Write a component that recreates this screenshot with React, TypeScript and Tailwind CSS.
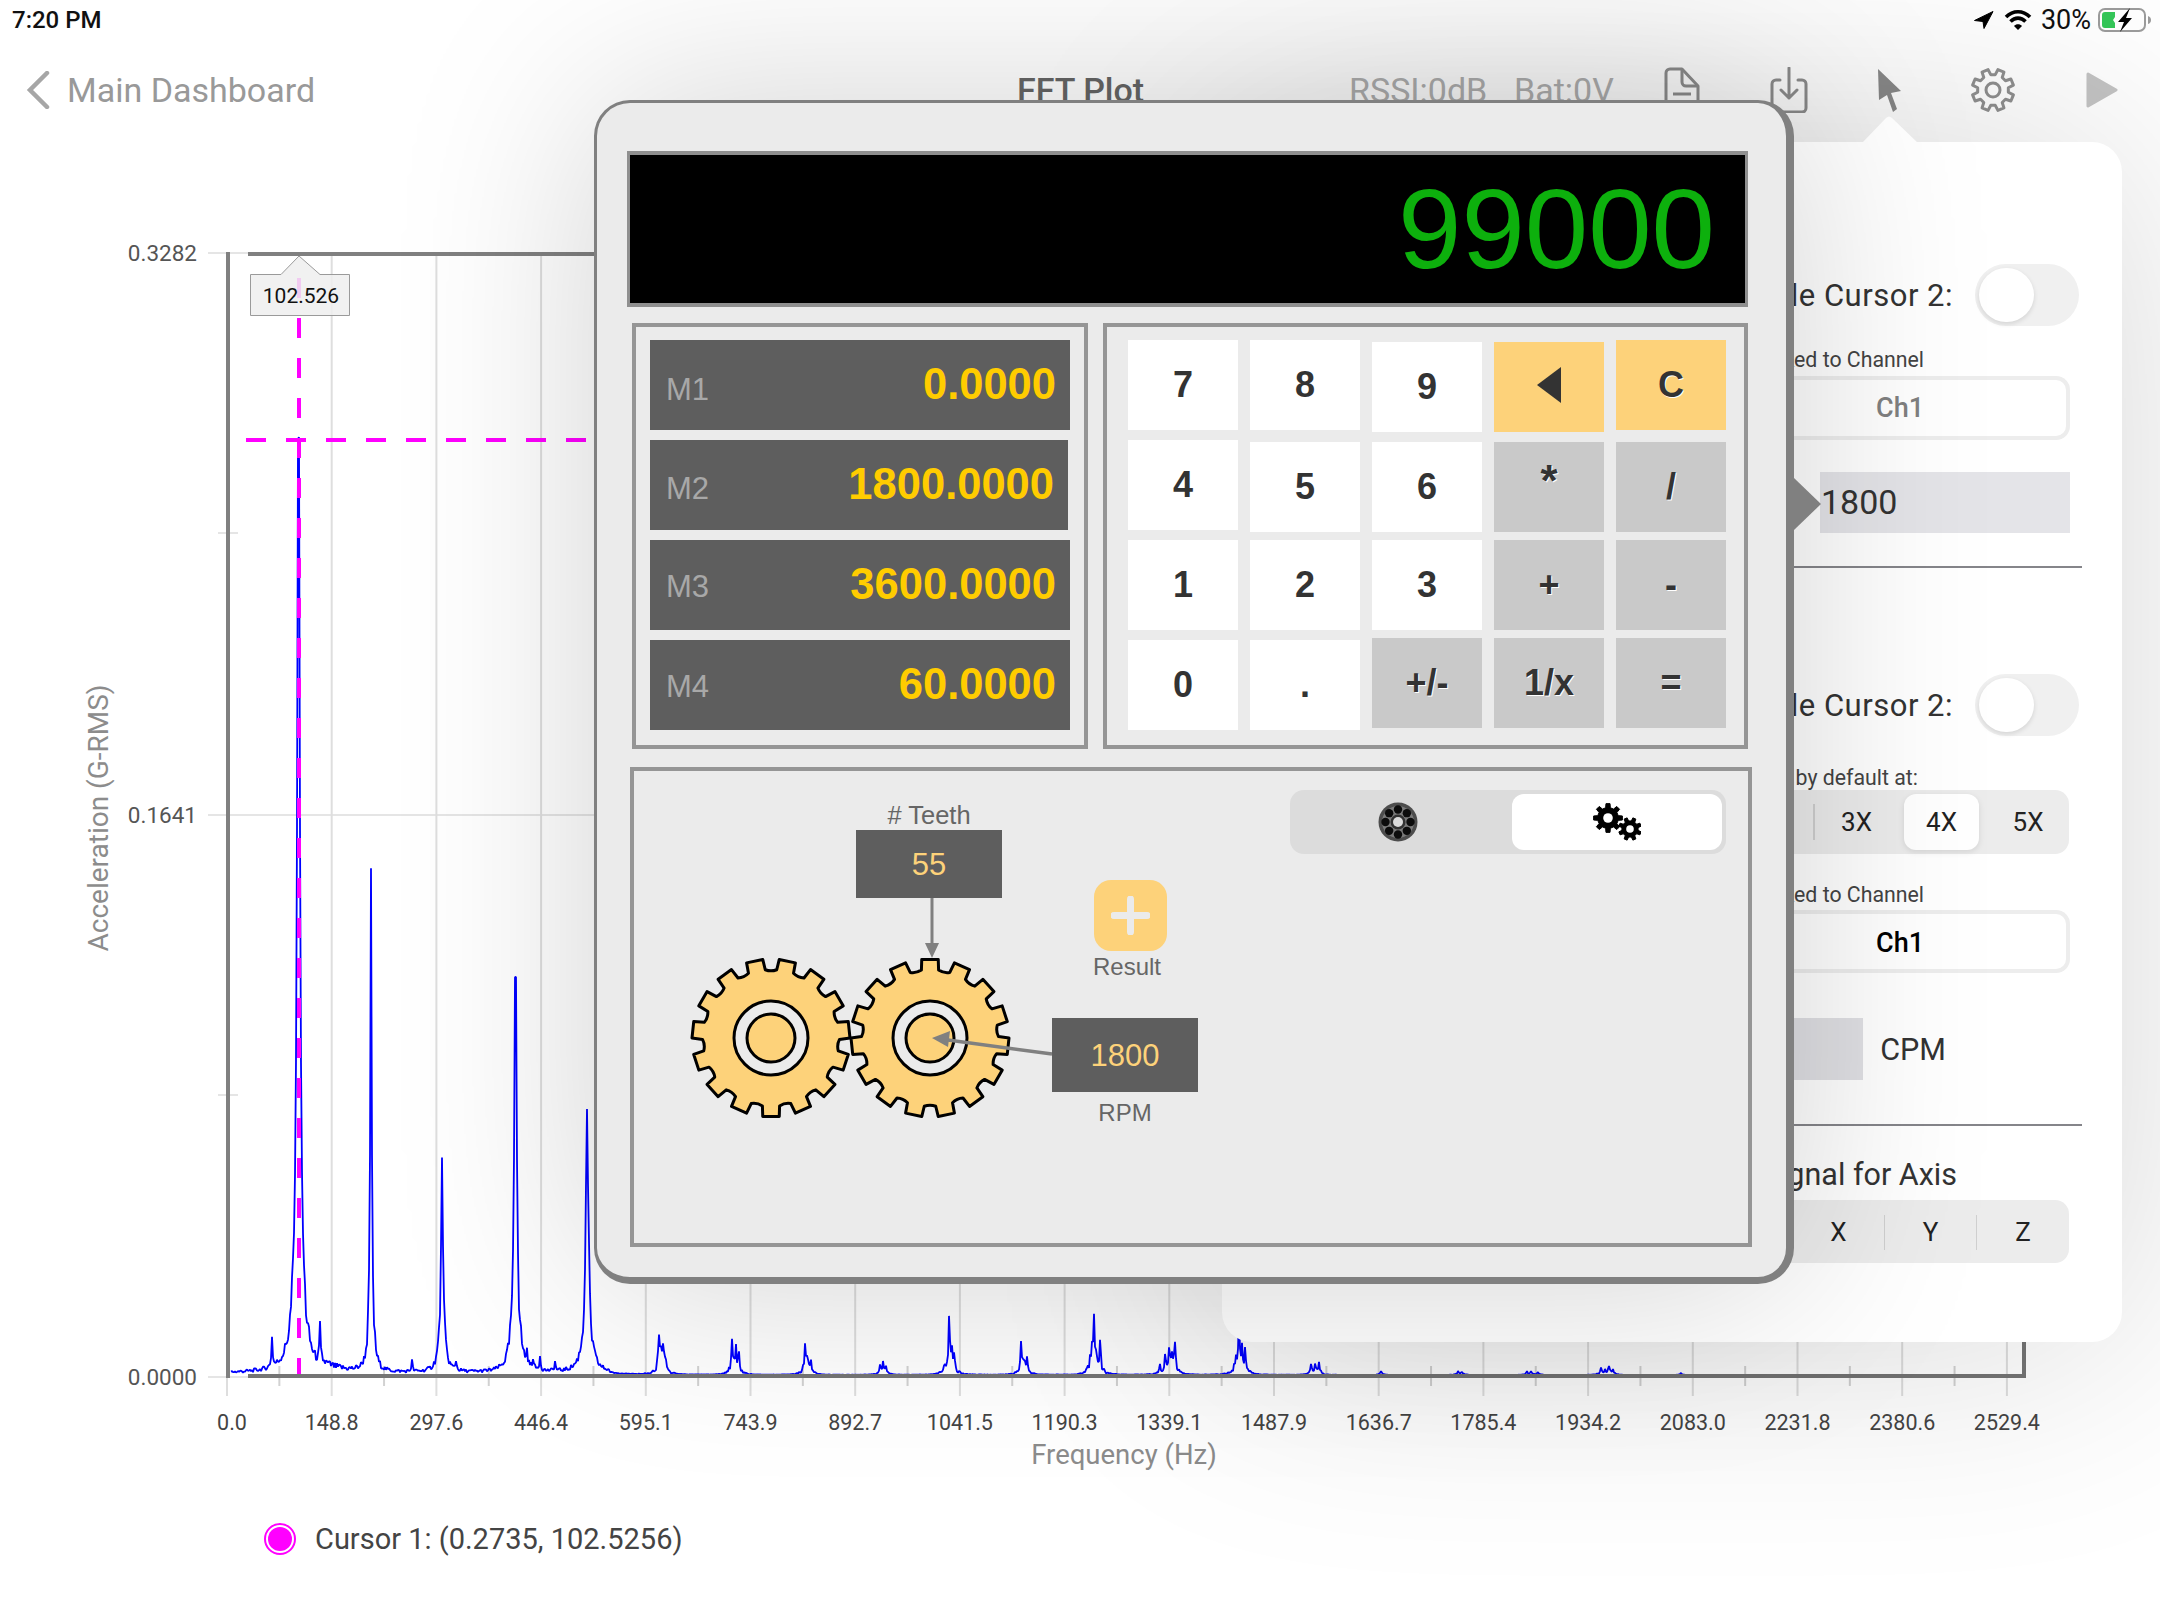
import React from "react";

const pt = (cx: number, cy: number, r: number, deg: number) => {
  const a = (deg * Math.PI) / 180;
  return `${(cx + r * Math.sin(a)).toFixed(2)} ${(cy - r * Math.cos(a)).toFixed(2)}`;
};

function gearPath(cx: number, cy: number, n: number, ro: number, ri: number, start: number, ho: number, hb: number, curve = 0) {
  let d = "";
  const step = 360 / n;
  for (let i = 0; i < n; i++) {
    const a = start + i * step;
    d += `${i === 0 ? "M" : "L"}${pt(cx, cy, ri, a - hb)} L${pt(cx, cy, ro, a - ho)} L${pt(cx, cy, ro, a + ho)} L${pt(cx, cy, ri, a + hb)} `;
    if (curve > 0) {
      d += `Q${pt(cx, cy, ri - curve, a + step / 2)} ${pt(cx, cy, ri, a + step - hb)} `;
    }
  }
  return d + "Z";
}

const noise = (x: number) => {
  const v = Math.sin(x * 12.9898) * 43758.5453;
  return v - Math.floor(v);
};

const majors = [
  { x: 298.5, h: 972, w: 1.5, bh: 60, bw: 7 },
  { x: 371, h: 469, w: 0.8, bh: 35, bw: 3.5 },
  { x: 442, h: 176, w: 1, bh: 40, bw: 3.5 },
  { x: 515.5, h: 403, w: 1.3, bh: 45, bw: 4.5 },
  { x: 587, h: 224, w: 1.4, bh: 40, bw: 5 },
];
const spikes: [number, number][] = [
  [272, 29], [320, 39], [412, 11], [456, 9], [527, 12], [533, 10], [540, 14], [555, 9], [659, 31], [661, 20], [663, 22], [665, 14],
  [732, 31], [736, 20], [739, 16], [805, 26], [807, 14], [811, 12],
  [880, 8], [883, 10], [886, 7], [945, 8], [949, 47], [952, 15], [954, 20], [1021, 27], [1024, 12], [1027, 15], [1090, 10], [1092, 14], [1094, 45], [1097, 12], [1100, 28], [1160, 9], [1165, 14], [1169, 24], [1172, 12], [1175, 29],
  [1236, 12], [1239, 60], [1242, 16], [1245, 17], [1311, 11], [1315, 8], [1319, 10], [1381, 4], [1458, 4], [1462, 3], [1527, 3], [1531, 3], [1538, 3], [1601, 6], [1605, 5], [1609, 9], [1613, 4], [1681, 2],
];

function spectrum() {
  const base = 1375;
  const out: string[] = [];
  for (let x = 231; x <= 1720; x++) {
    let t = 0;
    for (const p of majors) {
      t += p.h / (1 + ((x - p.x) / p.w) ** 2) + p.bh / (1 + ((x - p.x) / p.bw) ** 2);
    }
    let s = 0;
    let broad = 0;
    for (const [sx, sh] of spikes) {
      s += (x > 600 ? 0.82 : 1) * sh / (1 + ((x - sx) / 0.7) ** 2);
      if (x > 600) broad += (sh * 0.28) / (1 + ((x - sx) / 3) ** 2);
    }
    let floor = 0;
    if (x < 610) {
      const near = x > 321 && x < 365 ? 3 + ((365 - x) / 44) * 5 : 3;
      floor = near * (0.2 + 0.9 * noise(x));
    }
    const y = base - (t < 120 ? t * (0.8 + 0.4 * noise(x)) : t) - s - broad * (0.3 + 0.9 * noise(x * 2 + 1)) - floor;
    out.push(`${x},${Math.max(y, 300).toFixed(1)}`);
  }
  return out.join(" ");
}

const xLabels = ["0.0","148.8","297.6","446.4","595.1","743.9","892.7","1041.5","1190.3","1339.1","1487.9","1636.7","1785.4","1934.2","2083.0","2231.8","2380.6","2529.4"];

function Chart() {
  const xs = xLabels.map((_, i) => 227 + 104.7 * i);
  return (
    <svg viewBox="0 140 2160 1340" className="block w-[2160px] h-[1340px] [font-family:Roboto,sans-serif]">
      <line x1="208" y1="253" x2="248" y2="253" stroke="#e5e5e5" strokeWidth="2" />
      <line x1="208" y1="815" x2="2026" y2="815" stroke="#e5e5e5" strokeWidth="2" />
      <line x1="218" y1="533" x2="238" y2="533" stroke="#e5e5e5" strokeWidth="2" />
      <line x1="218" y1="1095" x2="238" y2="1095" stroke="#e5e5e5" strokeWidth="2" />
      <line x1="208" y1="1377" x2="248" y2="1377" stroke="#e5e5e5" strokeWidth="2" />
      {xs.map((x, i) => (
        <line key={i} x1={x} y1={i === 0 ? 1356 : 256} x2={x} y2="1396" stroke="#dedede" strokeWidth="2" />
      ))}
      {xs.slice(0, -1).map((x, i) => (
        <line key={i} x1={x + 52.35} y1="1366" x2={x + 52.35} y2="1386" stroke="#d2d2d2" strokeWidth="2" />
      ))}
      <polyline points={spectrum()} fill="none" stroke="#0000ff" strokeWidth="1.8" strokeLinejoin="bevel" />
      <line x1="299" y1="278" x2="299" y2="1375" stroke="#ff00ff" strokeWidth="4" strokeDasharray="20 20" />
      <line x1="246" y1="440" x2="594" y2="440" stroke="#ff00ff" strokeWidth="4" strokeDasharray="20 20" />
      <line x1="228" y1="252" x2="228" y2="1378" stroke="#808080" strokeWidth="4" />
      <line x1="248" y1="254" x2="2026" y2="254" stroke="#808080" strokeWidth="4" />
      <line x1="248" y1="1376" x2="2026" y2="1376" stroke="#757575" strokeWidth="4" />
      <line x1="2024" y1="254" x2="2024" y2="1378" stroke="#757575" strokeWidth="4" />
      <path d="M250.5 274.5 H281 L299 256 L320 274.5 H349.5 V315.5 H250.5 Z" fill="#eeeeee" fillOpacity="0.85" stroke="#9a9a9a" strokeWidth="1" />
      <text x="301" y="303" textAnchor="middle" className="text-[21px] fill-[#111]">102.526</text>
      <text x="197" y="261" textAnchor="end" className="text-[22.5px] fill-[#555]">0.3282</text>
      <text x="197" y="823" textAnchor="end" className="text-[22.5px] fill-[#555]">0.1641</text>
      <text x="197" y="1385" textAnchor="end" className="text-[22.5px] fill-[#555]">0.0000</text>
      {xLabels.map((t, i) => (
        <text key={t} x={i === 0 ? 232 : xs[i]} y="1430" textAnchor="middle" className="text-[21.5px] fill-[#444]">{t}</text>
      ))}
      <text x="1124" y="1464" textAnchor="middle" className="text-[27.5px] fill-[#8c8c8c]">Frequency (Hz)</text>
      <text transform="translate(108 818) rotate(-90)" textAnchor="middle" className="text-[28px] fill-[#8c8c8c]">Acceleration (G-RMS)</text>
    </svg>
  );
}

function StatusBar() {
  return (
    <div className="flex items-center justify-between h-[40px] pl-[12px] pr-[8px] text-[#111] [font-family:Roboto,sans-serif]">
      <span className="text-[24px] font-medium leading-none">7:20 PM</span>
      <div className="flex items-center">
        <svg width="20" height="18" viewBox="0 0 20 18"><path d="M19 0.5 L0.5 9.5 L9 10.5 L10 17.5 Z" fill="#000" stroke="#000" strokeLinejoin="round" /></svg>
        <svg width="28" height="22" viewBox="0 0 28 22" className="ml-[10px]">
          <path d="M2 8 C9 1 19 1 26 8" fill="none" stroke="#000" strokeWidth="3.6" />
          <path d="M6.5 12.5 C11 8 17 8 21.5 12.5" fill="none" stroke="#000" strokeWidth="3.6" />
          <path d="M10 17 L14 21 L18 17 C16 14.7 12 14.7 10 17 Z" fill="#000" />
        </svg>
        <span className="ml-[9px] text-[27px] leading-none">30%</span>
        <svg width="54" height="26" viewBox="0 0 54 26" className="ml-[7px]">
          <rect x="1" y="2" width="46" height="22" rx="6" fill="none" stroke="#9c9c9c" strokeWidth="2" />
          <path d="M7 5 H17 V10 L15 13 L17 16 V21 H7 Q4 21 4 18 V8 Q4 5 7 5 Z" fill="#34c759" />
          <path d="M50 9 Q53 10 53 13 Q53 16 50 17 Z" fill="#9c9c9c" />
          <path d="M32 1 L20 15 H26 L22 25 L34 11 H28 Z" fill="#000" />
        </svg>
      </div>
    </div>
  );
}

function NavBar() {
  const gear = gearPath(23, 23, 8, 21, 15.5, 22.5, 9, 14);
  return (
    <div className="flex items-center h-[100px] pl-[26px] [font-family:Roboto,sans-serif] text-[34px] leading-none">
      <div className="flex items-center w-[991px]">
        <svg width="24" height="38" viewBox="0 0 24 38"><path d="M21 2 L4 19 L21 36" fill="none" stroke="#a6a6a6" strokeWidth="4.5" strokeLinecap="round" /></svg>
        <span className="ml-[17px] text-[#999]">Main Dashboard</span>
      </div>
      <span className="w-[332px] font-medium text-[#666]">FFT Plot</span>
      <span className="w-[165px] text-[#b0b0b0]">RSSI:0dB</span>
      <span className="w-[150px] text-[#b0b0b0]">Bat:0V</span>
      <svg width="36" height="46" viewBox="0 0 36 46" className="mr-[70px]" fill="none" stroke="#8e8e8e" strokeWidth="3" strokeLinejoin="round">
        <path d="M2 42 V6 a4 4 0 0 1 4-4 H18 L34 19 V42 Z" />
        <path d="M18 2 V15 a4 4 0 0 0 4 4 H34" />
        <path d="M9 27 H27" />
      </svg>
      <svg width="38" height="46" viewBox="0 0 38 46" className="mr-[68px]" fill="none" stroke="#8e8e8e" strokeWidth="3" strokeLinejoin="round" strokeLinecap="round">
        <path d="M10 13 H6 a4 4 0 0 0 -4 4 V41 a4 4 0 0 0 4 4 H32 a4 4 0 0 0 4-4 V17 a4 4 0 0 0 -4 -4 H28" />
        <path d="M19 1 V31 M11 23 L19 31 L27 23" />
      </svg>
      <svg width="28" height="46" viewBox="0 0 28 46" className="mr-[66px]"><path d="M2 2 L25 24 L15 26 L21 42 L17 45 L11 28 L3 33 Z" fill="#8a8a8a" /></svg>
      <svg width="46" height="46" viewBox="0 0 46 46" className="mr-[70px]" fill="none" stroke="#909090" strokeWidth="3" strokeLinejoin="round">
        <path d={gear} />
        <circle cx="23" cy="23" r="7" />
      </svg>
      <svg width="32" height="46" viewBox="0 0 32 46"><path d="M2 7 L30 23 L2 39 Z" fill="#c4c4c4" stroke="#c4c4c4" strokeWidth="3" strokeLinejoin="round" /></svg>
    </div>
  );
}

function Toggle() {
  return (
    <div className="w-[104px] h-[62px] rounded-full bg-[#f0f0f0] p-[4px]">
      <div className="w-[55px] h-[54px] rounded-full bg-white shadow-[0_2px_5px_rgba(0,0,0,0.12)]" />
    </div>
  );
}

function ChannelSeg({ strong, h }: { strong?: boolean; h: string }) {
  return (
    <div className={`self-end mr-[52px] w-[400px] ${h} rounded-[14px] bg-[#ededed] p-[4px] flex justify-end`}>
      <div className={`w-[332px] h-full rounded-[10px] bg-white flex items-center justify-center text-[27px] font-medium ${strong ? "text-black pt-[3px]" : "text-[#808080]"}`}>Ch1</div>
    </div>
  );
}

function Popover() {
  const label = "text-[21.3px] leading-[24px] text-[#444] self-end";
  const title = "text-[31px] tracking-[0.5px] text-[#333] leading-none";
  return (
    <div className="absolute left-[1222px] top-[142px] w-[900px] h-[1200px] rounded-[30px] bg-white shadow-[0_0_250px_rgba(0,0,0,0.16)] flex flex-col [font-family:Roboto,sans-serif]">
      <svg width="56" height="28" viewBox="0 0 56 28" className="absolute left-[640px] top-[-27px]"><path d="M0 28 L24 3 Q27 0 30 3 L56 28 Z" fill="#fff" /></svg>
      <div className="mt-[122px] h-[62px] pr-[43px] flex justify-end items-center gap-[22px]">
        <span className={title}>Enable Cursor 2:</span>
        <Toggle />
      </div>
      <div className={`mt-[22px] mr-[198px] ${label}`}>Linked to Channel</div>
      <div className="mt-[4px] flex flex-col"><ChannelSeg h="h-[64px]" /></div>
      <div className="mt-[32px] mr-[52px] self-end w-[250px] h-[61px] bg-[#e4e4e8] flex items-center text-[34px] text-[#333] pl-[1px]">1800</div>
      <div className="mt-[33px] mr-[40px] h-[2px] bg-[#85858a]" />
      <div className="mt-[106px] h-[62px] pr-[43px] flex justify-end items-center gap-[22px]">
        <span className={title}>Enable Cursor 2:</span>
        <Toggle />
      </div>
      <div className={`mt-[30px] mr-[204px] ${label}`}>Harmonics by default at:</div>
      <div className="self-end mr-[53px] h-[64px] rounded-[14px] bg-[#ececec] p-[4px] flex items-center justify-end text-[26px] text-[#222] w-[500px]">
        <div className="w-[2px] h-[36px] bg-[#cfcfcf]" />
        <div className="w-[89px] pr-[6px] text-center">3X</div>
        <div className="w-[75px] h-[56px] rounded-[12px] bg-white flex items-center justify-center shadow-[0_2px_6px_rgba(0,0,0,0.1)]">4X</div>
        <div className="w-[86px] pl-[12px] text-center">5X</div>
      </div>
      <div className={`mt-[29px] mr-[198px] ${label}`}>Linked to Channel</div>
      <div className="mt-[3px] flex flex-col"><ChannelSeg strong h="h-[63px]" /></div>
      <div className="mt-[45px] h-[62px] pr-[176px] flex justify-end items-center gap-[17px]">
        <div className="w-[300px] h-full bg-[#e0e0e4]" />
        <span className="text-[30.5px] text-[#333] leading-none translate-y-[1px]">CPM</span>
      </div>
      <div className="mt-[44px] mr-[40px] h-[2px] bg-[#85858a]" />
      <div className="mt-[31px] mr-[165px] self-end h-[36px] flex items-center text-[30.5px] text-[#333]">Signal for Axis</div>
      <div className="mt-[7px] self-end mr-[53px] w-[400px] h-[63px] pt-[2px] rounded-[14px] bg-[#ececec] flex items-center justify-end text-[26px] text-[#222]">
        <div className="w-[91px] text-center">X</div>
        <div className="w-[1px] h-[35px] bg-[#cfcfcf]" />
        <div className="w-[91px] text-center">Y</div>
        <div className="w-[1px] h-[35px] bg-[#cfcfcf]" />
        <div className="w-[92px] text-center">Z</div>
      </div>
    </div>
  );
}

const memories: [string, string, string, string][] = [
  ["M1", "0.0000", "w-[420px]", "mt-[10px]"],
  ["M2", "1800.0000", "w-[418px]", "mt-[8px]"],
  ["M3", "3600.0000", "w-[420px]", "mt-[5px]"],
  ["M4", "60.0000", "w-[420px]", "mt-[5px]"],
];

type Key = { t: string; kind: "w" | "y" | "g"; off?: string };
const keys: Key[] = [
  { t: "7", kind: "w" }, { t: "8", kind: "w" }, { t: "9", kind: "w", off: "mt-[2px]" }, { t: "◀", kind: "y", off: "mt-[2px]" }, { t: "C", kind: "y" },
  { t: "4", kind: "w" }, { t: "5", kind: "w", off: "mt-[2px]" }, { t: "6", kind: "w", off: "mt-[2px]" }, { t: "*", kind: "g", off: "mt-[2px]" }, { t: "/", kind: "g", off: "mt-[2px]" },
  { t: "1", kind: "w" }, { t: "2", kind: "w" }, { t: "3", kind: "w" }, { t: "+", kind: "g" }, { t: "-", kind: "g" },
  { t: "0", kind: "w" }, { t: ".", kind: "w" }, { t: "+/-", kind: "g", off: "-mt-[2px]" }, { t: "1/x", kind: "g", off: "-mt-[2px]" }, { t: "=", kind: "g", off: "-mt-[2px]" },
];

function KeyCell({ k }: { k: Key }) {
  const bg = k.kind === "w" ? "bg-white" : k.kind === "y" ? "bg-[#fdd27a] [text-shadow:1px_1px_0_#fff]" : "bg-[#c9c9c9] [text-shadow:1px_1px_0_#fff]";
  return (
    <div className={`w-[110px] h-[90px] flex items-center justify-center text-[36px] font-bold text-[#333] ${bg} ${k.off ?? ""}`}>
      {k.t === "◀" ? (
        <svg width="26" height="36" viewBox="0 0 26 36" className="-translate-y-[2px]"><path d="M25 0 V36 L1 18 Z" fill="#333" /></svg>
      ) : k.t === "*" ? (
        <span className="text-[44px] -translate-y-[6px]">*</span>
      ) : (
        <span>{k.t}</span>
      )}
    </div>
  );
}

function Diagram() {
  const g1 = gearPath(771, 1038, 15, 79, 68.5, 12, 6, 7.2, 2.5);
  const g2 = gearPath(930, 1038, 15, 79, 68.5, 0, 6, 7.2, 2.5);
  return (
    <>
      <svg viewBox="634 771 1114 472" className="absolute inset-0 w-full h-full">
        {[{ d: g1, cx: 771 }, { d: g2, cx: 930 }].map((g) => (
          <g key={g.cx} stroke="#000" strokeWidth="3" strokeLinejoin="round">
            <path d={g.d} fill="#fdd27a" />
            <circle cx={g.cx} cy="1038" r="37" fill="#ebebeb" />
            <circle cx={g.cx} cy="1038" r="24" fill="#fdd27a" />
          </g>
        ))}
        <line x1="932" y1="898" x2="932" y2="945" stroke="#808080" strokeWidth="3" />
        <path d="M925 943 H939 L932 958 Z" fill="#808080" />
        <line x1="1052" y1="1054" x2="948" y2="1040" stroke="#808080" strokeWidth="3.5" />
        <path d="M932 1038 L950 1031 L948 1047 Z" fill="#808080" />
      </svg>
      <div className="absolute left-[222px] top-[32px] w-[146px] h-[24px] text-center text-[25.5px] leading-[24px] text-[#666]"># Teeth</div>
      <div className="absolute left-[222px] top-[59px] w-[146px] h-[68px] pt-[2px] bg-[#5e5e5e] flex items-center justify-center text-[31px] text-[#fdd27a]">55</div>
      <div className="absolute left-[460px] top-[109px] w-[73px] h-[71px] rounded-[17px] bg-[#fdd27a] flex items-center justify-center">
        <svg width="39" height="39" viewBox="0 0 39 39"><path d="M19.5 3 V36 M3 19.5 H36" stroke="#ebebeb" strokeWidth="7" strokeLinecap="round" /></svg>
      </div>
      <div className="absolute left-[448px] top-[184px] w-[90px] text-center text-[24px] leading-[24px] text-[#666]">Result</div>
      <div className="absolute left-[418px] top-[247px] w-[146px] h-[74px] pt-[2px] bg-[#5e5e5e] flex items-center justify-center text-[31px] text-[#fdd27a]">1800</div>
      <div className="absolute left-[446px] top-[330px] w-[90px] text-center text-[24px] leading-[24px] text-[#666]">RPM</div>
    </>
  );
}

function BearingIcon() {
  const balls = Array.from({ length: 8 }, (_, i) => (i * Math.PI) / 4);
  return (
    <svg width="40" height="40" viewBox="0 0 40 40" className="mr-[10px]">
      <circle cx="20" cy="20" r="19.5" fill="#4d4d4d" />
      <circle cx="20" cy="20" r="16" fill="#7a7a7a" />
      {balls.map((a, i) => (
        <circle key={i} cx={20 + 12.5 * Math.sin(a)} cy={20 - 12.5 * Math.cos(a)} r="4.2" fill="#0c0c0c" />
      ))}
      <circle cx="20" cy="20" r="7.5" fill="#333" />
      <circle cx="20" cy="20" r="5" fill="#dcdcdc" />
    </svg>
  );
}

function GearsIcon() {
  return (
    <svg width="48" height="38" viewBox="0 0 48 38">
      <path d={gearPath(15, 15, 8, 14.5, 10.5, 0, 8, 13)} fill="#000" stroke="#000" strokeLinejoin="round" />
      <circle cx="15" cy="15" r="4.8" fill="#fff" />
      <path d={gearPath(37, 26, 8, 11.5, 8.2, 22.5, 8, 13)} fill="#000" stroke="#000" strokeLinejoin="round" />
      <circle cx="37" cy="26" r="3.8" fill="#fff" />
    </svg>
  );
}

function Modal() {
  return (
    <div className="absolute left-[594px] top-[100px] w-[1200px] h-[1184px] box-border border-t-[3px] border-l-[3px] border-r-[8px] border-b-[7px] border-[#808080] rounded-[36px] bg-[#ebebeb] shadow-[0_0_200px_rgba(0,0,0,0.18)] pt-[48px] pl-[30px] flex flex-col [font-family:Liberation_Sans,Arial,sans-serif]">
      <svg width="27" height="52" viewBox="0 0 27 52" className="absolute left-[1197px] top-[375px]"><path d="M0 0 L27 26 L0 52 Z" fill="#808080" /></svg>
      <div className="w-[1121px] h-[156px] bg-black border-[#8f8f8f] border-t-[4px] border-l-[3px] border-r-[3px] border-b-[4px] flex items-center justify-end pr-[30px] text-[114px] leading-none text-[#0db00d]">99000</div>
      <div className="mt-[16px] ml-[5px] flex gap-[15px]">
        <div className="w-[456px] h-[426px] border-[4px] border-[#959595] pt-[13px] pl-[14px] flex flex-col gap-[10px]">
          {memories.map(([m, v, w, off]) => (
            <div key={m} className={`${w} h-[90px] bg-[#5e5e5e] flex items-center justify-between pl-[16px] pr-[14px]`}>
              <span className={`${off} text-[31px] text-[#a8a8a8]`}>{m}</span>
              <span className="text-[43.5px] font-bold text-[#ffcc00]">{v}</span>
            </div>
          ))}
        </div>
        <div className="w-[645px] h-[426px] border-[4px] border-[#959595] pt-[13px] pl-[21px] grid grid-cols-[repeat(5,110px)] grid-rows-[repeat(4,90px)] gap-x-[12px] gap-y-[10px]">
          {keys.map((k) => (
            <KeyCell key={k.t} k={k} />
          ))}
        </div>
      </div>
      <div className="relative mt-[18px] ml-[3px] w-[1122px] h-[480px] border-[4px] border-[#959595] pt-[19px] pr-[22px] flex justify-end items-start">
        <Diagram />
        <div className="relative w-[436px] h-[64px] rounded-[14px] bg-[#dcdcdc] p-[4px] flex justify-between">
          <div className="w-[218px] flex items-center justify-center"><BearingIcon /></div>
          <div className="w-[210px] h-[56px] rounded-[12px] bg-white flex items-center justify-center"><GearsIcon /></div>
        </div>
      </div>
    </div>
  );
}

export default function App() {
  return (
    <div className="relative w-[2160px] h-[1620px] overflow-hidden bg-white">
      <StatusBar />
      <NavBar />
      <Chart />
      <div className="mt-[43px] pl-[264px] flex items-center h-[32px] [font-family:Roboto,sans-serif]">
        <div className="w-[32px] h-[32px] rounded-full border-[2px] border-[#ff00ff] bg-white p-[2px]">
          <div className="w-full h-full rounded-full bg-[#ff00ff]" />
        </div>
        <span className="ml-[19px] text-[29px] text-[#444] leading-none">Cursor 1: (0.2735, 102.5256)</span>
      </div>
      <Popover />
      <Modal />
    </div>
  );
}
